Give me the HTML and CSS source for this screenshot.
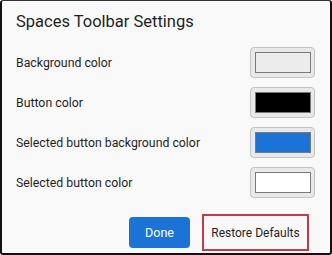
FILE: index.html
```html
<!DOCTYPE html>
<html>
<head>
<meta charset="utf-8">
<link rel="stylesheet" href="styles.css">
</head>
<body>
<div class="dialog">
  <h1 class="title">Spaces Toolbar Settings</h1>
  <div class="rows">
    <div class="row"><span class="label">Background color</span><button class="swatch"><span class="chip chip-bg"></span></button></div>
    <div class="row"><span class="label">Button color</span><button class="swatch"><span class="chip chip-btn"></span></button></div>
    <div class="row"><span class="label">Selected button background color</span><button class="swatch"><span class="chip chip-selbg"></span></button></div>
    <div class="row"><span class="label">Selected button color</span><button class="swatch"><span class="chip chip-sel"></span></button></div>
  </div>
  <div class="footer">
    <button class="btn btn-primary">Done</button>
    <button class="btn btn-plain">Restore Defaults</button>
  </div>
</div>
</body>
</html>
```
FILE: styles.css
```css
html, body {
  margin: 0;
  padding: 0;
  background: #ffffff;
}
body {
  font-family: Roboto, "Open Sans", sans-serif;
  color: #1c1c1c;
}
.dialog {
  box-sizing: border-box;
  width: 332px;
  height: 255px;
  background: #f9f9fa;
  border-left: 2px solid #111;
  border-right: 2px solid #111;
  border-top: 1px solid #333;
  border-bottom: 2px solid #111;
  border-radius: 3px;
  padding: 11px 15px 0 14px;
}
.title {
  margin: 0;
  font-size: 16.5px;
  font-weight: 400;
  line-height: 20px;
  color: #1f1f1f;
}
.rows {
  margin-top: 15px;
  display: flex;
  flex-direction: column;
  gap: 9px;
}
.row {
  display: flex;
  align-items: center;
  justify-content: space-between;
  height: 31px;
}
.label {
  font-size: 12.3px;
  color: #1f1f1f;
}
.swatch {
  box-sizing: border-box;
  width: 65px;
  height: 31px;
  padding: 0;
  border: 1px solid #c3c3c3;
  border-radius: 4px;
  background: #e9e9e9;
  display: flex;
  align-items: center;
  justify-content: center;
}
.chip {
  box-sizing: border-box;
  width: 56px;
  height: 21px;
  border: 1px solid #7a7a7a;
}
.chip-bg { background: #ececec; }
.chip-btn { background: #000000; }
.chip-selbg { background: #1a73d5; }
.chip-sel { background: #ffffff; }
.footer {
  margin-top: 19px;
  display: flex;
  justify-content: flex-end;
  gap: 15px;
  padding-right: 9px;
}
.btn {
  box-sizing: border-box;
  height: 31px;
  border: none;
  border-radius: 4px;
  font-family: Roboto, "Open Sans", sans-serif;
  font-size: 12.5px;
  padding: 0;
}
.btn-primary {
  width: 61px;
  background: #1a73d5;
  color: #ffffff;
}
.btn-plain {
  width: 101px;
  background: transparent;
  color: #1f1f1f;
  border-radius: 0;
  font-size: 12px;
  outline: 2px solid #c4394b;
  outline-offset: 1px;
}
```
